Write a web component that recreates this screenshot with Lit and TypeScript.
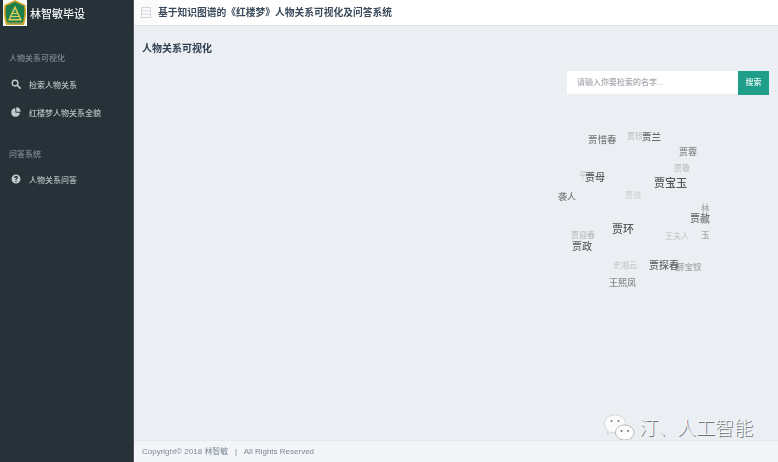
import { LitElement, html, css, svg } from "lit";
import { customElement } from "lit/decorators.js";

type Node = [string, number, number, number, string];

// name, left x, center y, font-size, colour
const NODES: Node[] = [
  ["贾珍", 627, 136, 8, "#bfc1c4"],
  ["贾惜春", 588, 139, 9.5, "#7d7f82"],
  ["贾兰", 642, 136, 9.5, "#66686b"],
  ["贾蓉", 679, 150.500, 9, "#86888b"],
  ["贾敬", 674, 168, 8, "#bfc1c4"],
  ["平儿", 579, 175, 8, "#c8cacd"],
  ["贾母", 585, 177, 10, "#58595c"],
  ["贾宝玉", 654, 182, 11, "#55575a"],
  ["袭人", 558, 196, 9, "#7d7f82"],
  ["贾琏", 625, 195, 8, "#cfd1d5"],
  ["贾赦", 690, 218, 10, "#636568"],
  ["贾环", 612, 228, 11, "#55575a"],
  ["贾迎春", 571, 235, 8, "#b9bbbe"],
  ["王夫人", 665, 236, 8, "#c8cacd"],
  ["贾政", 572, 246, 10, "#636568"],
  ["史湘云", 613, 265, 8, "#c8cacd"],
  ["薛宝钗", 676, 266, 8.5, "#a6a8ab"],
  ["贾探春", 649, 265, 10, "#5f6164"],
  ["王熙凤", 609, 281.500, 9, "#86888b"],
  ["林", 701, 207, 8.5, "#a6a8ab"],
  ["黛", 701, 219, 8.5, "#a6a8ab"],
  ["玉", 701, 234, 8.5, "#a6a8ab"],
];

const searchIcon = svg`<circle cx="6.500" cy="6.500" r="4.600" fill="none" stroke="currentColor" stroke-width="2.200"/><path d="M10 10 14.500 14.500" stroke="currentColor" stroke-width="2.600" stroke-linecap="round"/>`;
const pieIcon = svg`<path d="M7 2a6.800 6.800 0 1 0 7 7.200H7z" fill="currentColor"/><path d="M8.400 0.600a6.800 6.800 0 0 1 7 7H8.400z" fill="currentColor"/>`;
const helpIcon = svg`<path fill-rule="evenodd" fill="currentColor" d="M8 .8a7.200 7.200 0 1 1 0 14.400A7.200 7.200 0 0 1 8 .8zM7 10.800v2.100h2v-2.100zM8 3.300c-1.700 0-2.900.9-3.200 2.500l1.900.4c.2-.8.600-1.100 1.300-1.100.6 0 1 .3 1 .8 0 .4-.3.700-.8 1.100-.9.700-1.300 1.200-1.300 2.500h1.900c0-.6.200-1 .9-1.400.9-.7 1.400-1.300 1.400-2.400 0-1.500-1.300-2.400-3.100-2.400z"/>`;

@customElement("app-root")
export class AppRoot extends LitElement {
  static styles = css`
    :host {
      display: grid;
      grid-template-columns: 134px 1fr;
      width: 778px;
      height: 462px;
      overflow: hidden;
      font-family: "Liberation Sans", "Noto Sans CJK SC", sans-serif;
      background: #ebeef3;
    }
    .soft { filter: blur(0.3px); }
    .side {
      background: #263238;
      border-right: 1px solid #4a555b;
      display: flex;
      flex-direction: column;
    }
    .brand {
      height: 26px;
      display: flex;
      align-items: center;
      gap: 3px;
      padding-left: 3px;
      color: #f0f2f3;
      font-size: 11px;
      font-weight: 500;
    }
    .logo {
      width: 24px;
      height: 26px;
      background: #f9f9f4;
      flex: none;
      display: block;
    }
    .group {
      color: #7d8a92;
      font-size: 8px;
      font-weight: 500;
      line-height: 12px;
      padding-left: 9px;
    }
    .g1 { margin-top: 27px; margin-bottom: 5px; }
    .g2 { margin-top: 23px; margin-bottom: 4px; }
    .item {
      height: 28px;
      display: flex;
      align-items: center;
      gap: 8px;
      padding-left: 11px;
      color: #b4bdc2;
      font-size: 8px;
      font-weight: 500;
    }
    .item svg { width: 10px; height: 10px; flex: none; color: #c3cace; }
    .main { display: flex; flex-direction: column; min-width: 0; }
    .top {
      height: 26px;
      box-sizing: border-box;
      background: #fff;
      border-bottom: 1px solid #dfe2e7;
      display: flex;
      align-items: center;
      padding-bottom: 1px;
      flex: none;
    }
    .burger {
      width: 24px;
      align-self: stretch;
      background: #fbfbfc;
      display: flex;
      align-items: center;
      justify-content: center;
    }
    .burger svg { width: 10px; height: 11px; }
    .top h1 {
      margin: 0;
      font-size: 9.75px;
      font-weight: 700;
      color: #3a4a5a;
      white-space: nowrap;
    }
    .content {
      flex: 1;
      position: relative;
      padding: 16px 9px 0 8px;
    }
    .content h2 {
      margin: 0;
      font-size: 10px;
      line-height: 14px;
      font-weight: 700;
      color: #2f4050;
    }
    .search {
      display: flex;
      justify-content: flex-end;
      margin-top: 15px;
    }
    .input {
      width: 171px;
      height: 23px;
      box-sizing: border-box;
      background: #fff;
      padding-left: 10px;
      color: #a4a8ad;
      font-size: 8px;
      font-weight: 500;
      line-height: 23px;
    }
    .btn {
      width: 31px;
      height: 24px;
      margin-top: -0.5px;
      background: #1f9e8a;
      color: #e6f6f3;
      font-size: 8px;
      font-weight: 500;
      line-height: 24px;
      text-align: center;
    }
    .nodes { position: absolute; inset: 0; font-weight: 500; }
    .node {
      position: absolute;
      white-space: nowrap;
      line-height: 1;
      transform: translateY(-50%);
    }
    .mark {
      position: absolute;
      left: 469px;
      top: 388px;
      display: flex;
      align-items: center;
      gap: 4px;
      color: #f6f7f8;
      font-size: 19px;
      line-height: 24px;
      font-weight: 300;
      text-shadow: 1px 1px 0.5px #6d7075;
      white-space: nowrap;
    }
    .mark svg { width: 32px; height: 29px; flex: none; }
    .foot {
      height: 22px;
      box-sizing: border-box;
      flex: none;
      background: #f3f5f9;
      border-top: 1px solid #e4e7ec;
      padding-left: 8px;
      color: #7b8894;
      font-size: 8px;
      line-height: 22px;
      white-space: pre;
    }
  `;

  render() {
    return html`
      <aside class="side soft">
        <div class="brand">
          <svg class="logo" viewBox="0 0 24 26">
            <path d="M12 0 22.500 5c1.200 6 .8 13-1.500 20H3C.7 18 .3 11 1.500 5z" fill="#d3a72c"/>
            <path d="M12 1.800 21 6c.8 5 .6 11-1.200 16.500H4.200C2.400 17 2.200 11 3 6z" fill="#1f7d4a"/>
            <path d="M12 5.500 19 20.500H5z" fill="#e2cf5a"/>
            <path d="M12 9 16.800 19H7.200z" fill="#2c8a55"/>
            <path d="M8 16.500h8M9.500 13.500h5" stroke="#e2cf5a" stroke-width="1"/>
            <path d="M5.500 23.700h13" stroke="#7f9a6a" stroke-width="1.200"/>
          </svg>
          <span>林智敏毕设</span>
        </div>
        <div class="group g1">人物关系可视化</div>
        <div class="item"><svg viewBox="0 0 16 16">${searchIcon}</svg>检索人物关系</div>
        <div class="item"><svg viewBox="0 0 16 16">${pieIcon}</svg>红楼梦人物关系全貌</div>
        <div class="group g2">问答系统</div>
        <div class="item"><svg viewBox="0 0 16 16">${helpIcon}</svg>人物关系问答</div>
      </aside>
      <div class="main">
        <header class="top soft">
          <div class="burger">
            <svg viewBox="0 0 10 11">
              <rect x="0.500" y="0.500" width="9" height="10" fill="none" stroke="#d4d7dc"/>
              <path d="M0 3.800h10M0 7.200h10" stroke="#d4d7dc"/>
            </svg>
          </div>
          <h1>基于知识图谱的《红楼梦》人物关系可视化及问答系统</h1>
        </header>
        <section class="content">
          <h2 class="soft">人物关系可视化</h2>
          <div class="search soft">
            <div class="input">请输入你要检索的名字...</div>
            <div class="btn">搜索</div>
          </div>
          <div class="nodes soft">
            ${NODES.map(
              ([name, x, y, size, color]) => html`<span
                class="node"
                style="left:${x - 134}px;top:${y - 25}px;font-size:${size}px;color:${color}"
                >${name}</span
              >`
            )}
          </div>
          <div class="mark">
            <svg viewBox="0 0 32 29">
              <path d="M12 1C6 1 1.500 4.800 1.500 9.800c0 2.800 1.500 5.200 3.800 6.800l-1 3.400 4-2c1.300.4 2.400.6 3.700.6 6 0 10.500-4 10.500-8.800S18 1 12 1z" fill="#fbfbfc" stroke="#b4b7bc" stroke-width="0.500"/>
              <path d="M21.500 11c-5 0-9 3.400-9 7.500s4 7.500 9 7.500c1 0 2-.2 3-.5l3.500 2-.8-3c2.400-1.400 3.800-3.600 3.800-6 0-4.100-4.500-7.500-9.500-7.500z" fill="#fdfdfe" stroke="#8d9096" stroke-width="0.600"/>
              <circle cx="8.500" cy="7" r="1" fill="#777"/><circle cx="15.500" cy="7" r="1" fill="#777"/>
              <circle cx="18.500" cy="17" r="1" fill="#777"/><circle cx="25" cy="17" r="1" fill="#777"/>
            </svg>
            <span>汀、人工智能</span>
          </div>
        </section>
        <footer class="foot soft">Copyright© 2018 林智敏   |   All Rights Reserved</footer>
      </div>
    `;
  }
}
